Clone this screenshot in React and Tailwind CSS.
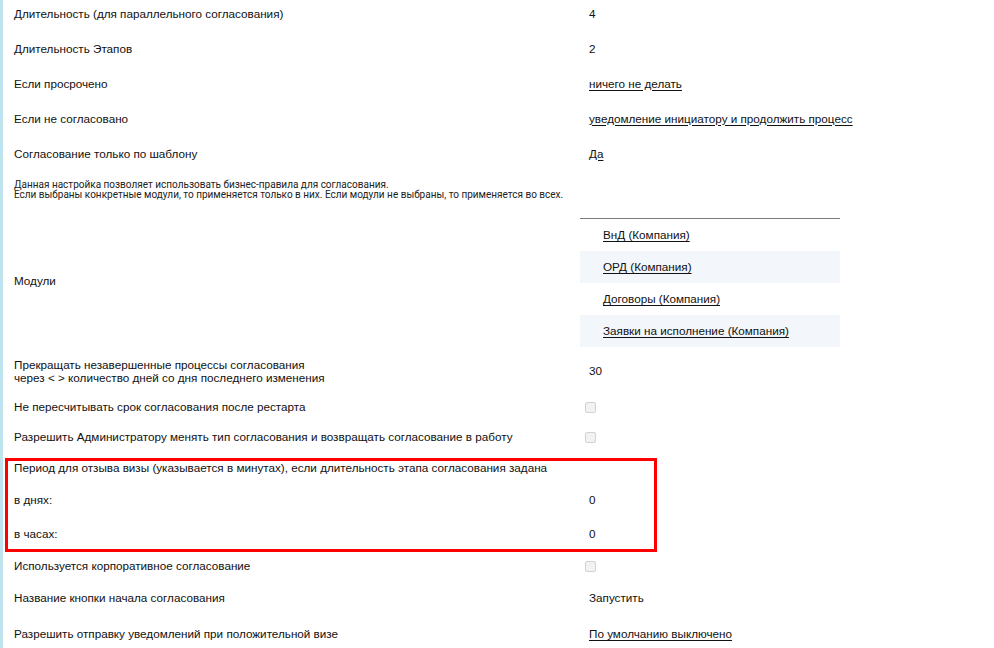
import React from "react";

const FONT = { fontFamily: '"Liberation Sans", Arial, sans-serif' };

function Row({ label, children, h, className = "" }) {
  return (
    <div className={`grid grid-cols-[575px_1fr] items-center pl-[11px] ${h} ${className}`}>
      <div>{label}</div>
      <div>{children}</div>
    </div>
  );
}

function Link({ children }) {
  return <a href="#" className="text-[#111] underline underline-offset-[2px]">{children}</a>;
}

function Check() {
  return <div className="-ml-[4px] h-[11px] w-[11px] rounded-[2px] border border-[#d2d2d2] bg-[#f2f2f2]" />;
}

const modules = [
  "ВнД (Компания)",
  "ОРД (Компания)",
  "Договоры (Компания)",
  "Заявки на исполнение (Компания)",
];

export default function App() {
  return (
    <div className="h-[648px] w-[994px] overflow-hidden bg-white text-[11.7px] leading-[14px] text-[#111]" style={FONT}>
      <div className="min-h-[660px] border-l-[3px] border-[#bfe3ef]">
        <div className="-mt-[4px]">
          <Row h="h-[35px]" label="Длительность (для параллельного согласования)">4</Row>
          <Row h="h-[35px]" label="Длительность Этапов">2</Row>
          <Row h="h-[35px]" label="Если просрочено">
            <Link>ничего не делать</Link>
          </Row>
          <Row h="h-[35px]" label="Если не согласовано">
            <Link>уведомление инициатору и продолжить процесс</Link>
          </Row>
          <Row h="h-[35px]" label="Согласование только по шаблону">
            <Link>Да</Link>
          </Row>
        </div>

        <div
          className="h-[43px] pl-[11px] pt-[9px] text-[10px] leading-[10px] text-[#222]"
          style={{ fontFamily: 'Roboto, "Noto Sans", sans-serif' }}
        >
          <div>Данная настройка позволяет использовать бизнес-правила для согласования.</div>
          <div>Если выбраны конкретные модули, то применяется только в них. Если модули не выбраны, то применяется во всех.</div>
        </div>

        <div className="grid h-[132px] grid-cols-[575px_1fr] items-center pl-[11px]">
          <div>Модули</div>
          <div className="self-start pt-[4px]">
            <div className="-ml-[9px] w-[260px] border-t border-[#7a7a7a]">
              {modules.map((m, i) => (
                <div
                  key={m}
                  className={`flex h-[32px] items-center pl-[23px] ${i % 2 === 1 ? "bg-[#f3f6fa]" : ""}`}
                >
                  <Link>{m}</Link>
                </div>
              ))}
            </div>
          </div>
        </div>

        <Row
          h="h-[46px]"
          className="pt-[4px]"
          label={
            <>
              <div>Прекращать незавершенные процессы согласования</div>
              <div className="-mt-[1px]">через &lt; &gt; количество дней со дня последнего изменения</div>
            </>
          }
        >
          30
        </Row>
        <Row h="h-[30px]" label="Не пересчитывать срок согласования после рестарта">
          <Check />
        </Row>
        <Row h="h-[30px]" label="Разрешить Администратору менять тип согласования и возвращать согласование в работу">
          <Check />
        </Row>

        <div className="ml-[2px] mt-[6px] w-[652px] border-[3px] border-[#ff0000]">
          <div className="grid h-[12px] grid-cols-[575px_1fr] items-center pl-[6px]">
            <div className="whitespace-nowrap">
              Период для отзыва визы (указывается в минутах), если длительность этапа согласования задана
            </div>
            <div />
          </div>
          <div className="mt-[8px] grid h-[37px] grid-cols-[575px_1fr] items-center pl-[6px]">
            <div>в днях:</div>
            <div>0</div>
          </div>
          <div className="grid h-[31px] grid-cols-[575px_1fr] items-center pl-[6px]">
            <div>в часах:</div>
            <div>0</div>
          </div>
        </div>

        <Row h="h-[28px]" label="Используется корпоративное согласование">
          <Check />
        </Row>
        <Row h="h-[36px]" label="Название кнопки начала согласования">
          Запустить
        </Row>
        <Row h="h-[36px]" label="Разрешить отправку уведомлений при положительной визе">
          <Link>По умолчанию выключено</Link>
        </Row>
      </div>
    </div>
  );
}
